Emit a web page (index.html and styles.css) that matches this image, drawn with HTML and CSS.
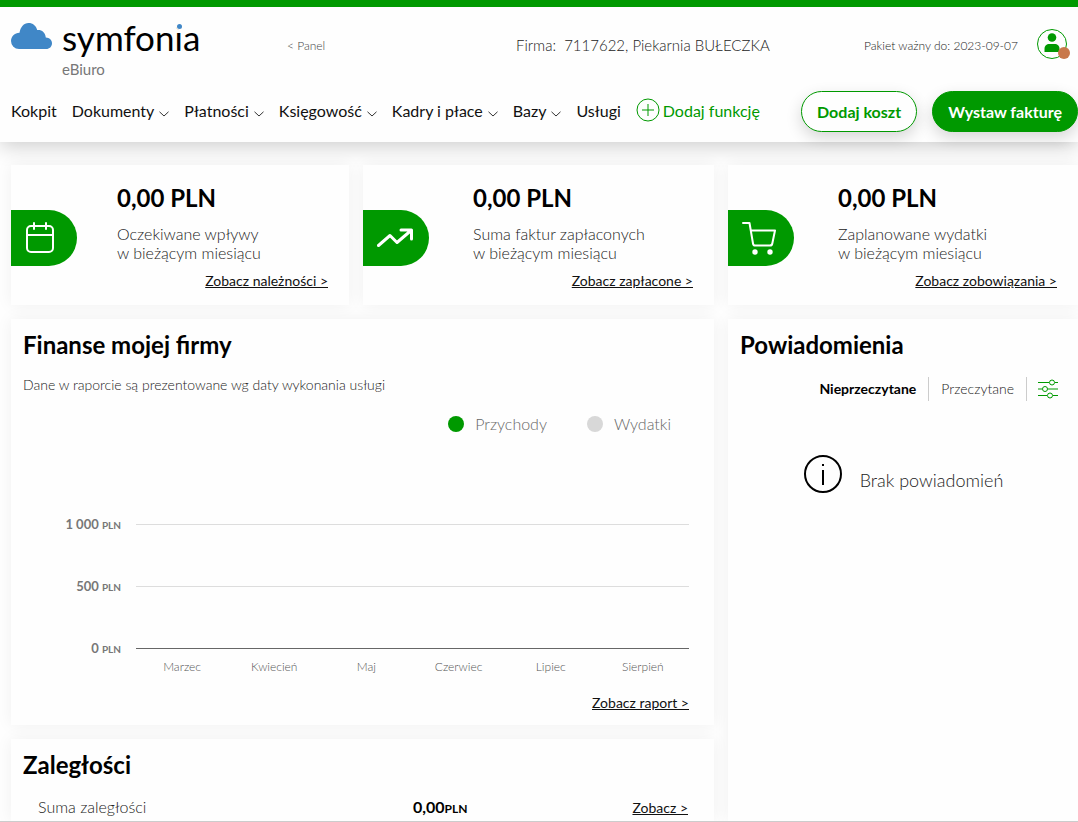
FILE: index.html
```html
<!DOCTYPE html>
<html lang="pl">
<head>
    <meta charset="UTF-8">
    <meta name="viewport" content="width=device-width, initial-scale=1.0">
    <title>symfonia eBiuro</title>
    <link rel="stylesheet" href="styles.css">
</head>
<body>
    <div class="page">
        <header class="header">
            <div class="top">
                <a class="logo" href="#">
                    <svg class="cloud" viewBox="0 0 41 26" width="41" height="26">
                        <path fill="#4087c7" d="M8 26a8 8 0 0 1-8-8c0-4.500 3.500-8 8.500-8.300C9.500 4 12.800 0 17.500 0c4.400 0 7.600 2.700 8.700 7 4.200-.6 8 2 8.600 7.500C38.500 14.700 41 17 41 20.200c0 3.300-2.500 5.800-5.800 5.800z"/>
                    </svg>
                    <span class="brand">
                        <span class="name">symfon<span class="dot-i">i</span>a</span>
                        <span class="sub">eBiuro</span>
                    </span>
                </a>
                <a class="panel" href="#">&lt; Panel</a>
                <div class="firm">Firma: &nbsp;7117622, Piekarnia BUŁECZKA</div>
                <div class="plan">Pakiet ważny do: 2023-09-07</div>
                <button class="avatar" aria-label="Konto">
                    <svg viewBox="0 0 34 32" width="34" height="32">
                        <circle cx="15" cy="15" r="14.500" fill="none" stroke="#090"/>
                        <circle cx="15" cy="8.500" r="4.300" fill="#090"/>
                        <path fill="#090" d="M7.500 23v-3c0-3.500 2-5 5-5h5c3 0 5 1.500 5 5v3z"/>
                        <circle cx="27" cy="24" r="6" fill="#c8784a"/>
                    </svg>
                </button>
            </div>
            <div class="bottom">
                <nav class="nav">
                    <a href="#">Kokpit</a>
                    <a href="#">Dokumenty<svg class="arrow" viewBox="0 0 10 6"><path d="M.5.800 5 5 9.500.800"/></svg></a>
                    <a href="#">Płatności<svg class="arrow" viewBox="0 0 10 6"><path d="M.5.800 5 5 9.500.800"/></svg></a>
                    <a href="#">Księgowość<svg class="arrow" viewBox="0 0 10 6"><path d="M.5.800 5 5 9.500.800"/></svg></a>
                    <a href="#">Kadry i płace<svg class="arrow" viewBox="0 0 10 6"><path d="M.5.800 5 5 9.500.800"/></svg></a>
                    <a href="#">Bazy<svg class="arrow" viewBox="0 0 10 6"><path d="M.5.800 5 5 9.500.800"/></svg></a>
                    <a href="#">Usługi</a>
                    <a class="add" href="#"><svg viewBox="0 0 24 24" width="24" height="24"><circle cx="12" cy="12" r="11"/><path d="M12 6v12M6 12h12"/></svg>Dodaj funkcję</a>
                </nav>
                <div class="actions">
                    <button class="btn">Dodaj koszt</button>
                    <button class="btn btn-green">Wystaw fakturę</button>
                </div>
            </div>
        </header>

        <main class="board">
            <section class="card tile">
                <div class="badge">
                    <svg viewBox="0 0 30 32" width="30" height="32"><rect x="2" y="4" width="26" height="26" rx="4"/><path d="M2 13h26M9 1v6M21 1v6"/></svg>
                </div>
                <div class="tile-text">
                    <h2>0,00 PLN</h2>
                    <p>Oczekiwane wpływy<br>w bieżącym miesiącu</p>
                    <a class="more" href="#">Zobacz należności &gt;</a>
                </div>
            </section>
            <section class="card tile">
                <div class="badge">
                    <svg class="trend" viewBox="0 0 36 20" width="36" height="20"><path d="M1.500 17.500 13 7.500l7 7L34 2.500M24 2h10.500v9"/></svg>
                </div>
                <div class="tile-text">
                    <h2>0,00 PLN</h2>
                    <p>Suma faktur zapłaconych<br>w bieżącym miesiącu</p>
                    <a class="more" href="#">Zobacz zapłacone &gt;</a>
                </div>
            </section>
            <section class="card tile">
                <div class="badge">
                    <svg viewBox="0 0 34 34" width="34" height="34"><path d="M1 2h6.500L11 22.500q.3 2 2 2h15q2 0 2.300-2L33 9.500H9"/><circle class="wheel" cx="13" cy="31" r="2.700"/><circle class="wheel" cx="28" cy="31" r="2.700"/></svg>
                </div>
                <div class="tile-text">
                    <h2>0,00 PLN</h2>
                    <p>Zaplanowane wydatki<br>w bieżącym miesiącu</p>
                    <a class="more" href="#">Zobacz zobowiązania &gt;</a>
                </div>
            </section>

            <section class="card finance">
                <h2>Finanse mojej firmy</h2>
                <p class="note">Dane w raporcie są prezentowane wg daty wykonania usługi</p>
                <div class="legend">
                    <span class="income">Przychody</span>
                    <span class="costs">Wydatki</span>
                </div>
                <div class="chart">
                    <div class="tick"><span>1 000 <small>PLN</small></span></div>
                    <div class="tick"><span>500 <small>PLN</small></span></div>
                    <div class="tick zero"><span>0 <small>PLN</small></span></div>
                    <div class="months">
                        <span>Marzec</span>
                        <span>Kwiecień</span>
                        <span>Maj</span>
                        <span>Czerwiec</span>
                        <span>Lipiec</span>
                        <span>Sierpień</span>
                    </div>
                </div>
                <a class="more" href="#">Zobacz raport &gt;</a>
            </section>

            <section class="card notices">
                <h2>Powiadomienia</h2>
                <div class="tabs">
                    <button class="active">Nieprzeczytane</button>
                    <button>Przeczytane</button>
                    <button aria-label="Ustawienia">
                        <svg viewBox="0 0 20 20" width="20" height="20"><path d="M0 3.500h11M17 3.500h3M0 10h4M10 10h10M0 16.500h9M15 16.500h5"/><circle cx="14" cy="3.500" r="2.500"/><circle cx="7" cy="10" r="2.500"/><circle cx="12" cy="16.500" r="2.500"/></svg>
                    </button>
                </div>
                <div class="empty">
                    <svg viewBox="0 0 40 40" width="40" height="40"><circle cx="20" cy="20" r="18"/><path d="M20 16v15M20 10v2"/></svg>
                    <span>Brak powiadomień</span>
                </div>
            </section>

            <section class="card debts">
                <h2>Zaległości</h2>
                <div class="debt-row">
                    <span>Suma zaległości</span>
                    <strong>0,00<small>PLN</small></strong>
                    <a class="more" href="#">Zobacz &gt;</a>
                </div>
            </section>
        </main>
    </div>
</body>
</html>
```
FILE: styles.css
```css
* {
    box-sizing: border-box;
    margin: 0;
    padding: 0;
}
body {
    font-family: Lato, "Noto Sans", sans-serif;
    font-size: 16px;
    font-weight: 300;
    color: #222;
    background: #fefefe;
}
a {
    color: #111;
    text-decoration: none;
}
button {
    font: inherit;
    color: inherit;
    border: 0;
    background: none;
    cursor: pointer;
}
h2 {
    font-size: 24px;
    font-weight: 700;
    line-height: 28px;
    color: #000;
}
.page {
    min-height: 100vh;
    display: flex;
    flex-direction: column;
    overflow: hidden;
    border-bottom: 1px solid #ccc;
}

/* header */
.header {
    border-top: 7px solid #090;
    padding: 6px 0 10px 11px;
    background: #fefefe;
    box-shadow: 0 4px 20px rgba(0, 0, 0, .2);
}
.top {
    display: grid;
    grid-template-columns: 276px 229px 1fr auto 41px;
    align-items: center;
    height: 64px;
}
.logo {
    display: flex;
    align-items: flex-start;
    gap: 10px;
}
.cloud {
    margin-top: 10px;
}
.brand {
    display: flex;
    flex-direction: column;
}
.name {
    font-size: 35px;
    font-weight: 400;
    line-height: 48px;
    color: #000;
}
.dot-i {
    position: relative;
}
.dot-i::after {
    content: "";
    position: absolute;
    top: 8px;
    left: 50%;
    width: 5px;
    height: 5px;
    margin-left: -2px;
    border-radius: 50%;
    background: #4087c7;
    box-shadow: 0 0 0 1px #fefefe;
}
.sub {
    font-size: 15px;
    font-weight: 400;
    line-height: 16px;
    color: #777;
}
.panel {
    font-size: 12px;
    color: #444;
}
.firm {
    font-size: 15px;
}
.plan {
    font-size: 12px;
    margin-right: 19px;
}
.avatar {
    justify-self: start;
    height: 32px;
}
.bottom {
    display: flex;
    align-items: center;
    justify-content: space-between;
    margin-top: 14px;
}
.nav {
    display: flex;
    align-items: center;
    gap: 15px;
    padding-bottom: 3px;
    font-weight: 400;
    white-space: nowrap;
}
.arrow {
    width: 10px;
    height: 6px;
    margin-left: 5px;
    fill: none;
    stroke: #333;
}
.nav .add {
    display: flex;
    align-items: center;
    gap: 3px;
    color: #090;
}
.add svg {
    fill: none;
    stroke: #090;
}
.actions {
    display: flex;
    gap: 15px;
}
.btn {
    height: 41px;
    padding: 0 15px;
    border: 1px solid #090;
    border-radius: 21px;
    font-weight: 700;
    color: #090;
    background: #fefefe;
    box-shadow: 0 6px 16px rgba(0, 0, 0, .16);
    white-space: nowrap;
}
.btn-green {
    color: #fff;
    background: #090;
}

/* dashboard */
.board {
    flex: 1;
    display: grid;
    grid-template-columns: 338fr 351fr 350fr;
    grid-template-rows: 140px auto 1fr;
    gap: 14px;
    padding: 23px 0 0 11px;
}
.card {
    background: #fefefe;
    box-shadow: 0 0 16px rgba(0, 0, 0, .06);
}
.more {
    font-size: 14px;
    font-weight: 400;
    line-height: 18px;
    text-decoration: underline;
}
.tile {
    display: flex;
    align-items: center;
}
.badge {
    display: flex;
    align-items: center;
    width: 66px;
    height: 56px;
    margin-top: 6px;
    padding-left: 14px;
    border-radius: 0 28px 28px 0;
    background: #090;
}
.badge svg {
    fill: none;
    stroke: #fff;
    stroke-width: 2;
    stroke-linecap: round;
    stroke-linejoin: round;
}
.badge .trend {
    stroke-width: 3;
}
.badge .wheel {
    fill: #fff;
    stroke: none;
}
.tile-text {
    flex: 1;
    display: flex;
    flex-direction: column;
    padding: 4px 21px 0 44px;
}
.tile:first-child .tile-text {
    padding-left: 40px;
}
.tile-text p {
    margin: 12px 0 10px;
    line-height: 19px;
}
.tile-text .more {
    align-self: flex-end;
}
.finance {
    grid-column: span 2;
    display: flex;
    flex-direction: column;
    padding: 12px 25px 13px 12px;
}
.note {
    margin-top: 17px;
    font-size: 14px;
    line-height: 18px;
}
.legend {
    display: flex;
    justify-content: flex-end;
    gap: 40px;
    margin: 19px 18px 58px 0;
    line-height: 22px;
    color: #666;
}
.legend span {
    display: flex;
    align-items: center;
    gap: 11px;
}
.legend span::before {
    content: "";
    width: 16px;
    height: 16px;
    border-radius: 50%;
    background: #090;
}
.legend .costs::before {
    background: #d8d8d8;
}
.tick {
    display: grid;
    grid-template-columns: 98px 1fr;
    gap: 15px;
    align-items: center;
    height: 62px;
    font-size: 13px;
    font-weight: 700;
    text-align: right;
    color: #777;
}
.tick small {
    font-size: 10px;
}
.tick::after {
    content: "";
    border-top: 1px solid #ddd;
}
.zero::after {
    border-color: #666;
}
.chart {
    margin-bottom: 19px;
}
.months {
    display: grid;
    grid-template-columns: repeat(6, 1fr);
    margin: -20px 0 0 113px;
    font-size: 12px;
    line-height: 16px;
    text-align: center;
    color: #555;
}
.finance .more {
    align-self: flex-end;
}
.notices {
    grid-row: span 2;
    padding: 12px;
}
.tabs {
    display: flex;
    justify-content: flex-end;
    margin: 18px 8px 0 0;
    font-size: 14px;
}
.tabs button {
    height: 24px;
    padding: 0 12px 2px;
    border-right: 1px solid #ccc;
}
.tabs button:last-child {
    padding: 0 0 0 11px;
    border-right: 0;
}
.tabs .active {
    font-weight: 700;
    color: #000;
}
.tabs svg {
    display: block;
    fill: none;
    stroke: #090;
}
.empty {
    display: flex;
    align-items: center;
    justify-content: center;
    gap: 17px;
    margin-top: 53px;
    font-size: 18px;
}
.empty span {
    padding-top: 12px;
}
.empty svg {
    fill: none;
    stroke: #000;
    stroke-width: 2;
}
.debts {
    grid-column: span 2;
    padding: 12px 26px 0 12px;
}
.debt-row {
    display: grid;
    grid-template-columns: 375px 1fr auto;
    align-items: baseline;
    margin-top: 18px;
    padding-left: 15px;
    line-height: 20px;
}
.debt-row strong {
    color: #000;
    font-weight: 700;
}
.debt-row small {
    font-size: 12px;
}
```
